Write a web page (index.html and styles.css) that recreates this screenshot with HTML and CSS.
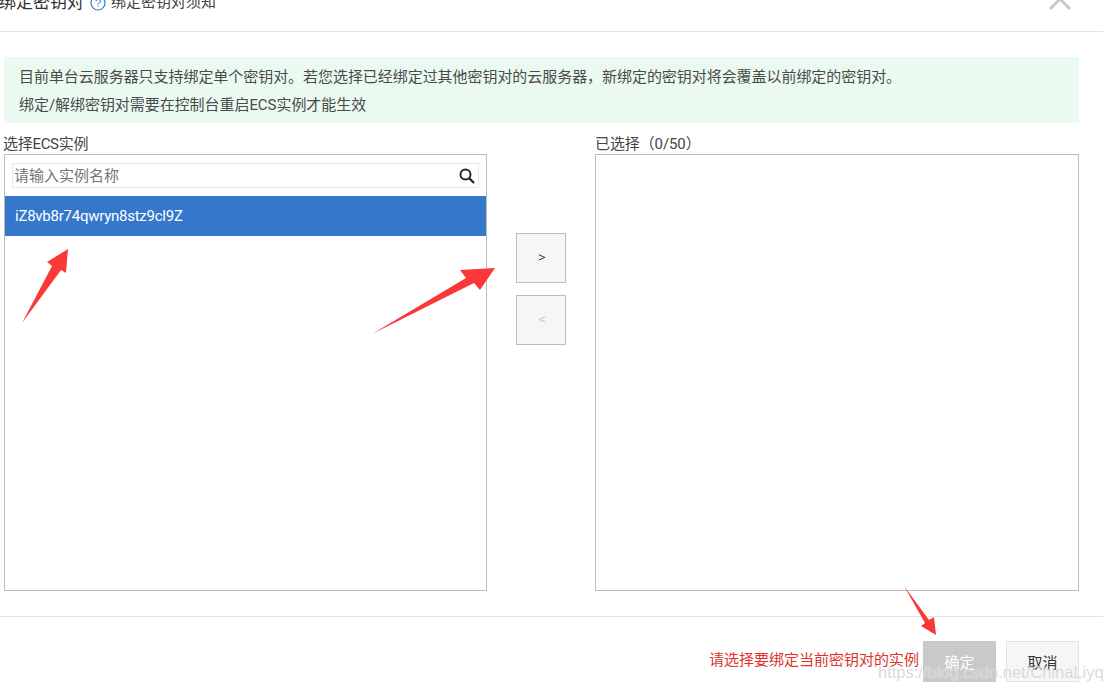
FILE: index.html
```html
<!DOCTYPE html>
<html lang="zh-CN">
<head>
<meta charset="utf-8">
<title>绑定密钥对</title>
<link rel="stylesheet" href="styles.css">
</head>
<body>
<div class="dialog">
  <header class="head">
    <span class="title">绑定密钥对</span>
    <svg class="help" width="16" height="16" viewBox="0 0 16 16"><circle cx="8" cy="8" r="7" fill="none" stroke="#3a7fd0" stroke-width="1.2"/><text x="8" y="12" text-anchor="middle" class="help-q">?</text></svg>
    <span class="notice">绑定密钥对须知</span>
    <svg class="close" width="22" height="22" viewBox="0 0 22 22"><path d="M1 21 21 1M1 1l20 20" stroke="#c4c4c4" stroke-width="2.6" fill="none"/></svg>
  </header>
  <main class="body">
    <div class="alert">
      <p>目前单台云服务器只支持绑定单个密钥对。若您选择已经绑定过其他密钥对的云服务器，新绑定的密钥对将会覆盖以前绑定的密钥对。</p>
      <p>绑定/解绑密钥对需要在控制台重启ECS实例才能生效</p>
    </div>
    <div class="transfer">
      <section class="col">
        <div class="label">选择ECS实例</div>
        <div class="box">
          <div class="search">
            <span class="placeholder">请输入实例名称</span>
            <svg width="16" height="16" viewBox="0 0 16 16"><circle cx="6.5" cy="6.5" r="5" fill="none" stroke="#222" stroke-width="1.9"/><path d="M10.2 10.2 15 15" stroke="#222" stroke-width="2.3"/></svg>
          </div>
          <div class="item">iZ8vb8r74qwryn8stz9cl9Z</div>
        </div>
      </section>
      <div class="moves">
        <button class="move on">&gt;</button>
        <button class="move">&lt;</button>
      </div>
      <section class="col">
        <div class="label">已选择（0/50）</div>
        <div class="box"></div>
      </section>
    </div>
  </main>
  <footer class="foot">
    <span class="msg">请选择要绑定当前密钥对的实例</span>
    <button class="btn ok">确定</button>
    <button class="btn cancel">取消</button>
  </footer>
  <svg class="arrows" width="1103" height="690" viewBox="0 0 1103 690">
    <path fill="#fb3838" d="M22 323 52 266 47 262 68 249 66 273 61 270Z"/>
    <path fill="#fb3838" d="M372 334 466 278 460 270 495 268 480 290 474 283Z"/>
    <path fill="#fb3838" d="M904 586 929 620 934 617 936 635 921 626 925 623Z"/>
  </svg>
  <div class="mark">https://blog.csdn.net/ChinaLiyq</div>
</div>
</body>
</html>
```
FILE: styles.css
```css
* { box-sizing: border-box; }
html, body { margin: 0; padding: 0; background: #fff; }
body { font-family: Roboto, "Noto Sans CJK SC", sans-serif; font-size: 15px; color: #444; }
.dialog { position: relative; width: 1103px; height: 690px; overflow: hidden; display: flex; flex-direction: column; }
.head { height: 32px; flex: none; border-bottom: 1px solid #e3e3e3; display: flex; align-items: flex-start; position: relative; }
.title { font-size: 17px; line-height: 24px; margin: -10px 0 0 -1px; color: #333; white-space: nowrap; }
.help { margin: -5px 5px 0 6px; flex: none; }
.help-q { font-size: 11px; fill: #3a7fd0; font-family: "Liberation Sans", sans-serif; }
.notice { line-height: 24px; margin-top: -10px; color: #444; }
.close { position: absolute; left: 1049px; top: -12px; }
.body { flex: 1; padding: 25px 24px 0 4px; display: flex; flex-direction: column; }
.alert { height: 66px; flex: none; background: #ebfaf1; padding: 6px 0 0 15px; }
.alert p { margin: 0; line-height: 28px; white-space: nowrap; color: #4a4a4a; letter-spacing: -.05px; }
.transfer { display: flex; margin-top: 10px; flex: 1; }
.col { display: flex; flex-direction: column; }
.col:first-child { width: 483px; }
.col:last-child { width: 484px; }
.label { height: 21px; line-height: 22px; color: #444; margin-left: -1px; white-space: nowrap; letter-spacing: -.3px; }
.col:last-child .label { margin-left: 0; letter-spacing: -.1px; }
.box { height: 437px; border: 1px solid #bcbcbc; padding-top: 8px; }
.search { height: 25px; margin: 0 7px; border: 1px solid #e8e8e8; display: flex; align-items: center; justify-content: space-between; padding: 0 3px 2px 1px; }
.search svg { margin-top: 2px; }
.placeholder { color: #757575; }
.item { height: 40px; margin-top: 8px; background: #3477cb; color: #fff; line-height: 41px; padding-left: 10px; letter-spacing: -.25px; }
.moves { width: 108px; flex: none; padding: 100px 0 0 29px; display: flex; flex-direction: column; gap: 12px; }
.move { width: 50px; height: 50px; border: 1px solid #bcbcbc; background: #f6f6f6; padding: 0 0 2px 2px; color: #bbb; font: 13px "Noto Sans", sans-serif; }
.move.on { color: #1a2a3a; }
.foot { height: 74px; flex: none; border-top: 1px solid #e3e3e3; display: flex; align-items: flex-start; padding: 24px 24px 0 0; justify-content: flex-end; }
.msg { color: #e0322b; line-height: 40px; margin-right: 4px; margin-top: -1px; white-space: nowrap; }
.btn { width: 73px; height: 41px; font: 15px "Noto Sans CJK SC", sans-serif; padding: 0; border: 1px solid #e3e3e3; background: #f6f6f6; color: #333; }
.ok { background: #c9c9c9; border-color: #c9c9c9; color: #fff; margin-right: 10px; }
.arrows { position: absolute; left: 0; top: 0; pointer-events: none; }
.mark { position: absolute; left: 878px; top: 663px; font: 16.5px "Liberation Sans", sans-serif; color: rgba(205,205,205,.75); text-shadow: 0 0 1px rgba(255,255,255,.7); white-space: nowrap; }
```
